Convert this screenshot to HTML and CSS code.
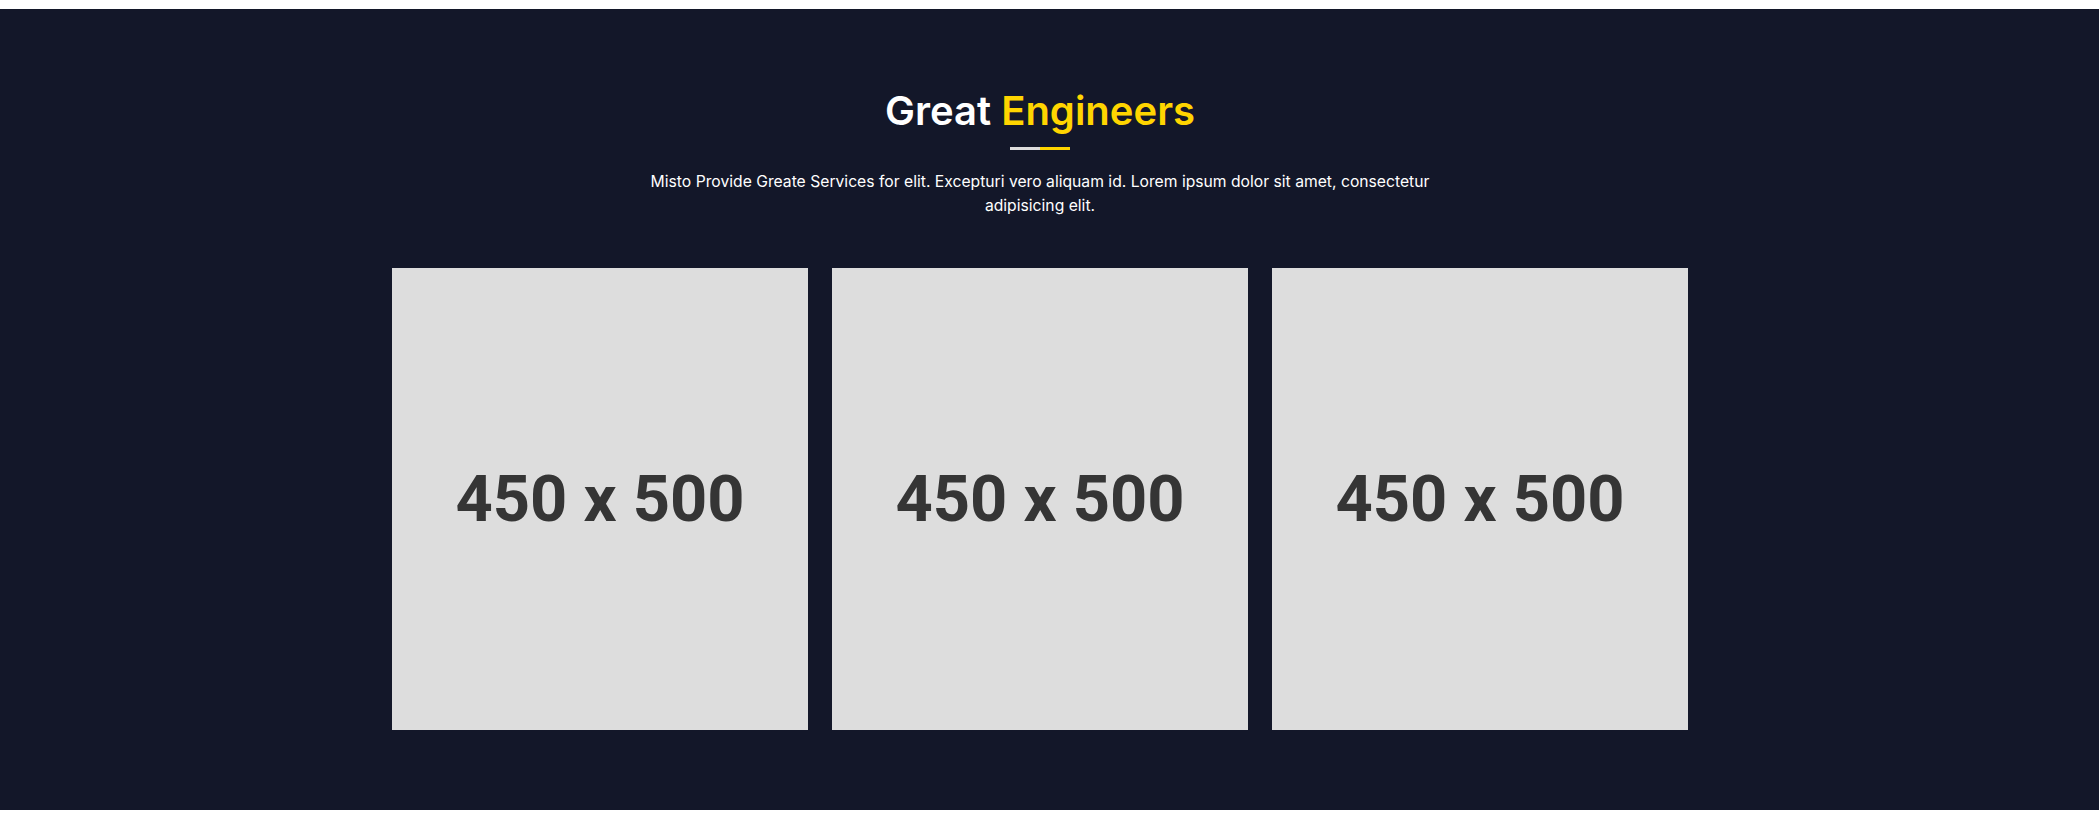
FILE: index.html
```html
<!DOCTYPE html>
<html lang="en">
<head>
    <meta charset="UTF-8">
    <meta name="viewport" content="width=device-width, initial-scale=1.0">
    <title>Great Engineers</title>
    <link rel="stylesheet" href="styles.css">
</head>
<body>
    <section class="team">
        <div class="container">
            <div class="section-title">
                <h2>Great <span>Engineers</span></h2>
                <div class="title-line"><i></i><i></i></div>
                <p>Misto Provide Greate Services for elit. Excepturi vero aliquam id. Lorem ipsum dolor sit amet, consectetur adipisicing elit.</p>
            </div>
            <div class="team-grid">
                <div class="member"><div class="placeholder">450 x 500</div></div>
                <div class="member"><div class="placeholder">450 x 500</div></div>
                <div class="member"><div class="placeholder">450 x 500</div></div>
            </div>
        </div>
    </section>
</body>
</html>
```

FILE: styles.css
```css
body {
    margin: 0;
    background-color: #fff;
    font-family: Inter, "Noto Sans", sans-serif;
}
.team {
    margin-top: 9px;
    height: 801px;
    box-sizing: border-box;
    padding: 78px 19px 80px 0;
    background-color: #131729;
    color: #fff;
}
.container {
    max-width: 1296px;
    margin: 0 auto;
}
.section-title {
    text-align: center;
}
.section-title h2 {
    margin: 0;
    font-size: 40px;
    line-height: 48px;
    font-weight: 600;
}
.section-title h2 span {
    color: #ffd500;
}
.title-line {
    display: flex;
    justify-content: center;
    margin-top: 12px;
}
.title-line i {
    display: block;
    width: 30px;
    height: 3px;
    background-color: #dddddd;
}
.title-line i + i {
    background-color: #ffd500;
}
.section-title p {
    max-width: 820px;
    margin: 20px auto 0;
    font-size: 15.7px;
    line-height: 24px;
}
.team-grid {
    display: grid;
    grid-template-columns: repeat(3, 416px);
    gap: 24px;
    justify-content: center;
    margin-top: 50px;
}
.placeholder {
    height: 462px;
    display: flex;
    align-items: center;
    justify-content: center;
    background-color: #dddddd;
    color: #353535;
    font-family: Roboto, sans-serif;
    font-weight: 700;
    font-size: 65px;
}
```
